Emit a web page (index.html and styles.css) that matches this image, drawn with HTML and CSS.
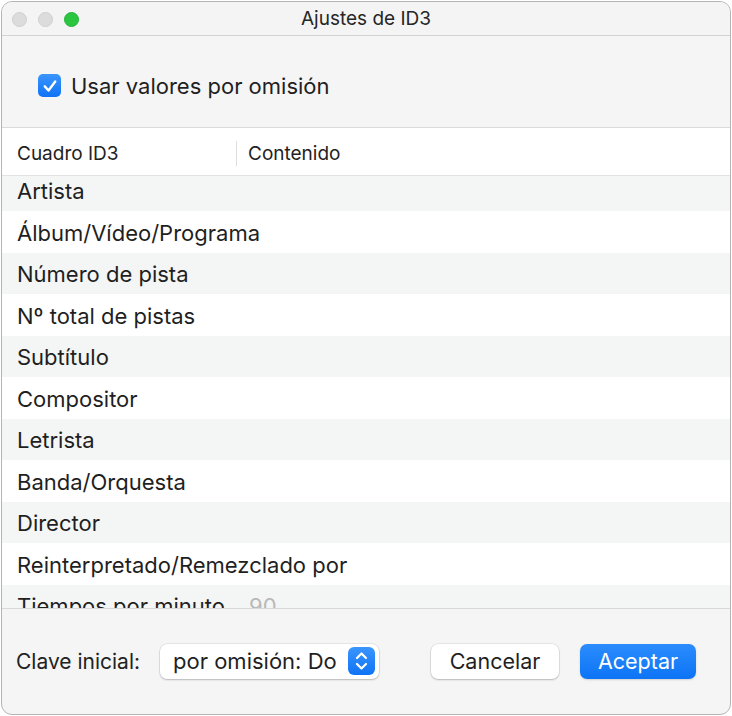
FILE: index.html
```html
<!DOCTYPE html>
<html lang="es">
<head>
<meta charset="utf-8">
<title>Ajustes de ID3</title>
<link rel="stylesheet" href="styles.css">
</head>
<body>
<div class="window">
  <div class="titlebar">
    <div class="lights">
      <span class="light gray"></span>
      <span class="light gray"></span>
      <span class="light green"></span>
    </div>
    <div class="title">Ajustes de ID3</div>
  </div>
  <div class="top">
    <label class="check">
      <span class="box">
        <svg viewBox="0 0 24 24" width="18" height="18"><path d="M5 12.5 L10 18 L19 6" fill="none" stroke="#fff" stroke-width="3.2" stroke-linecap="round" stroke-linejoin="round"/></svg>
      </span>
      <span class="check-label">Usar valores por omisión</span>
    </label>
  </div>
  <div class="table">
    <div class="thead">
      <div class="th first">Cuadro ID3</div>
      <div class="th second">Contenido</div>
    </div>
    <div class="tbody">
      <div class="rows">
        <div class="row alt">Artista</div>
        <div class="row">Álbum/Vídeo/Programa</div>
        <div class="row alt">Número de pista</div>
        <div class="row">Nº total de pistas</div>
        <div class="row alt">Subtítulo</div>
        <div class="row">Compositor</div>
        <div class="row alt">Letrista</div>
        <div class="row">Banda/Orquesta</div>
        <div class="row alt">Director</div>
        <div class="row">Reinterpretado/Remezclado por</div>
        <div class="row alt"><span class="c1">Tiempos por minuto</span><span class="c2">90</span></div>
      </div>
    </div>
  </div>
  <div class="footer">
    <span class="key-label">Clave inicial:</span>
    <div class="popup">
      <span class="popup-text">por omisión: Do</span>
      <span class="stepper">
        <svg viewBox="0 0 27 28" width="27" height="28"><path d="M9 11 L13.5 6.5 L18 11" fill="none" stroke="#fff" stroke-width="2.2" stroke-linecap="round" stroke-linejoin="round"/><path d="M9 17 L13.5 21.5 L18 17" fill="none" stroke="#fff" stroke-width="2.2" stroke-linecap="round" stroke-linejoin="round"/></svg>
      </span>
    </div>
    <div class="spacer"></div>
    <button class="btn cancel">Cancelar</button>
    <button class="btn ok">Aceptar</button>
  </div>
</div>
</body>
</html>
```
FILE: styles.css
```css
html, body {
  margin: 0;
  padding: 0;
  background: #ffffff;
}
body {
  font-family: "Inter", "Liberation Sans", sans-serif;
  color: #1d1d1d;
  width: 732px;
  height: 716px;
  overflow: hidden;
}
.window {
  margin: 1px;
  width: 728px;
  height: 712px;
  border: 1px solid #b5b5b5;
  border-radius: 11px;
  overflow: hidden;
  background: #f5f5f5;
  display: flex;
  flex-direction: column;
}
.titlebar {
  height: 33px;
  border-bottom: 1px solid #d3d3d3;
  background: #f4f4f4;
  position: relative;
  display: flex;
  align-items: center;
  justify-content: center;
  flex: none;
}
.lights {
  position: absolute;
  left: 10px;
  top: 10px;
  display: flex;
  gap: 11px;
}
.light {
  width: 15px;
  height: 15px;
  border-radius: 50%;
  box-sizing: border-box;
}
.light.gray {
  background: #dcdcdc;
  border: 1px solid #cfcfcf;
}
.light.green {
  background: #2ac640;
  border: 1px solid #26b23a;
}
.title {
  font-size: 19px;
  color: #262626;
  margin-top: 0;
}
.top {
  height: 91px;
  display: flex;
  align-items: center;
  padding-left: 36px;
  flex: none;
  box-sizing: border-box;
  padding-top: 8px;
}
.check {
  display: flex;
  align-items: center;
  gap: 10px;
}
.box {
  width: 23px;
  height: 23px;
  border-radius: 5px;
  background: linear-gradient(#3a95fd, #0e73f5);
  display: flex;
  align-items: center;
  justify-content: center;
}
.check-label {
  font-size: 22px;
  color: #1f1f1f;
}
.table {
  border-top: 1px solid #dadada;
  border-bottom: 1px solid #d8d8d8;
  background: #ffffff;
  flex: none;
}
.thead {
  height: 48px;
  box-sizing: border-box;
  padding-top: 3px;
  display: flex;
  align-items: center;
  border-bottom: 1px solid #e2e2e2;
  background: #ffffff;
}
.th {
  font-size: 19px;
  color: #222;
}
.th.first {
  width: 219px;
  padding-left: 15px;
  border-right: 1px solid #dedede;
  line-height: 25px;
}
.th.second {
  padding-left: 11px;
}
.tbody {
  height: 432px;
  overflow: hidden;
}
.rows {
  margin-top: -6.5px;
}
.row {
  height: 41.5px;
  display: flex;
  align-items: center;
  padding-left: 15px;
  font-size: 22px;
  color: #1f1f1f;
  background: #ffffff;
  padding-top: 2px;
  box-sizing: border-box;
}
.row.alt {
  background: #f4f5f5;
}
.c1 {
  width: 232px;
}
.c2 {
  color: #b8b8b8;
}
.footer {
  flex: 1;
  display: flex;
  align-items: center;
  padding: 0 34px 1px 14px;
}
.key-label {
  font-size: 21px;
  color: #222;
  margin-right: 20px;
}
.popup {
  width: 219px;
  height: 35px;
  box-sizing: border-box;
  background: #fff;
  border-radius: 7px;
  box-shadow: 0 0 0 0.5px rgba(0,0,0,0.12), 0 1px 2px rgba(0,0,0,0.2);
  display: flex;
  align-items: center;
  justify-content: space-between;
  padding: 0 4px 0 13px;
}
.popup-text {
  font-size: 22px;
  color: #1f1f1f;
}
.stepper {
  width: 27px;
  height: 28px;
  border-radius: 6px;
  background: linear-gradient(#3a95fd, #0e73f5);
  display: flex;
}
.spacer {
  flex: 1;
}
.btn {
  height: 35px;
  border: none;
  border-radius: 7px;
  font-family: inherit;
  font-size: 21.5px;
  padding: 0;
}
.btn.cancel {
  width: 128px;
  background: #fff;
  color: #1f1f1f;
  box-shadow: 0 0 0 0.5px rgba(0,0,0,0.12), 0 1px 2px rgba(0,0,0,0.2);
  margin-right: 21px;
}
.btn.ok {
  width: 116px;
  background: linear-gradient(#2b8cfc, #0d74f6);
  color: #fff;
  box-shadow: 0 1px 2px rgba(0,0,0,0.15);
}
```
